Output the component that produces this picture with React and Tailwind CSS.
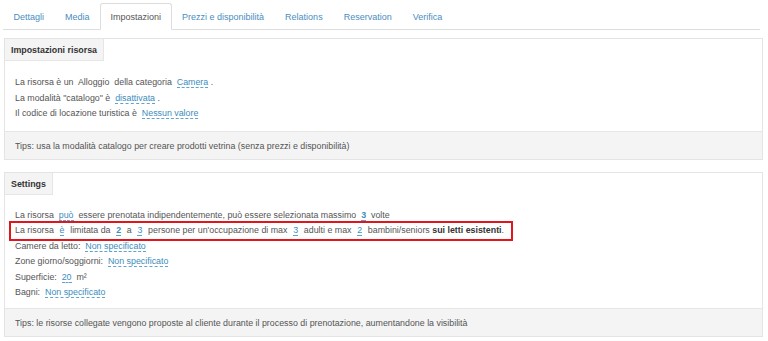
const tabs = ["Dettagli", "Media", "Impostazioni", "Prezzi e disponibilità", "Relations", "Reservation", "Verifica"];

const Editable = ({ children, bold, wide }) => (
  <span
    className={`text-[#3c8dbc] border-b border-dashed border-[#5fa2d0] ${bold ? "font-bold" : ""} ${wide ? "mx-[0.8px]" : ""}`}
  >
    {children}
  </span>
);

const Panel = ({ title, tips, children, bodyClass }) => (
  <div className="ml-[4px] w-[759px] border border-[#e4e4e4]">
    <div className="inline-block h-[22px] leading-[22px] px-[6px] bg-[#f4f4f4] border-r border-b border-[#e6e6e6] font-bold text-[#333]">
      {title}
    </div>
    <div className={`pl-[10px] whitespace-pre ${bodyClass}`}>{children}</div>
    <div className="h-[28px] leading-[28px] px-[10px] bg-[#f4f4f4] border-t border-[#e6e6e6]">{tips}</div>
  </div>
);

export default function App() {
  return (
    <div className="w-[768px] h-[341px] overflow-hidden bg-white font-['Liberation_Sans',Arial,sans-serif] text-[8.85px] text-[#555]">
      <ul className="flex ml-[3px] mr-[8px] pt-[3px] border-b border-[#ddd]">
        {tabs.map((t) => (
          <li key={t} className="-mb-px">
            <a
              className={
                t === "Impostazioni"
                  ? "block h-[27px] leading-[26px] px-[9.5px] border border-[#ddd] border-b-white bg-white text-[#555] rounded-t-[3px] text-[9px]"
                  : "block h-[27px] leading-[26px] px-[9.5px] border border-transparent text-[#4a8ec0] text-[9px]"
              }
            >
              {t}
            </a>
          </li>
        ))}
      </ul>

      <div className="pt-[8px] flex flex-col gap-[12px]">
        <Panel
          title="Impostazioni risorsa"
          tips="Tips:  usa la modalità catalogo per creare prodotti vetrina (senza prezzi e disponibilità)"
          bodyClass="pt-[14px] pb-[9px] leading-[15.5px]"
        >
          <div>
            La risorsa è un  Alloggio  della categoria  <Editable>Camera</Editable> .
          </div>
          <div>
            La modalità "catalogo" è  <Editable>disattivata</Editable> .
          </div>
          <div>
            Il codice di locazione turistica è  <Editable>Nessun valore</Editable>
          </div>
        </Panel>

        <Panel
          title="Settings"
          tips="Tips:  le risorse collegate vengono proposte al cliente durante il processo di prenotazione, aumentandone la visibilità"
          bodyClass="pt-[13px] pb-[7px] leading-[15.6px]"
        >
          <div>
            La risorsa  <Editable>può</Editable>  essere prenotata indipendentemente, può essere selezionata massimo  <Editable bold>3</Editable>  volte
          </div>
          <div>
            <span className="relative inline-block">
              La risorsa  <Editable wide>è</Editable>  limitata da  <Editable wide bold>2</Editable>  a  <Editable wide>3</Editable>  persone per un'occupazione di max  <Editable wide>3</Editable>  adulti e max  <Editable wide>2</Editable>  bambini/seniors <b className="text-[#333]">sui letti esistenti</b>.
              <span className="absolute -left-[6px] -right-[9px] -top-[2px] -bottom-[2px] border-2 border-[#e0161c]" />
            </span>
          </div>
          <div>
            Camere da letto:  <Editable>Non specificato</Editable>
          </div>
          <div>
            Zone giorno/soggiorni:  <Editable>Non specificato</Editable>
          </div>
          <div>
            Superficie:  <Editable>20</Editable>  m²
          </div>
          <div>
            Bagni:  <Editable>Non specificato</Editable>
          </div>
        </Panel>
      </div>
    </div>
  );
}
